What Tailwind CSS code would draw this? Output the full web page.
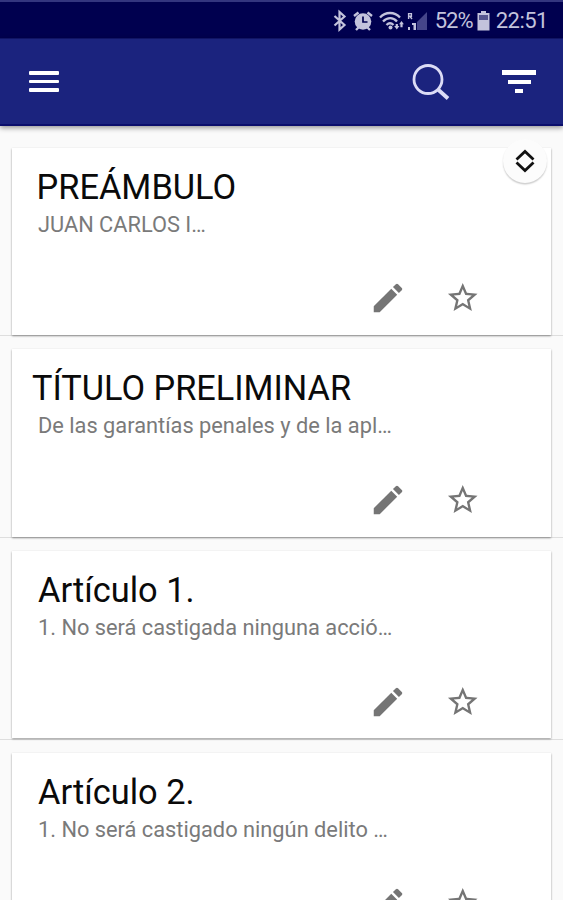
<!doctype html>
<html lang="es">
    <head>
        <meta charset="UTF-8" />
        <meta name="viewport" content="width=device-width, initial-scale=1.0" />
        <title>Código Penal</title>
        <script src="https://cdn.jsdelivr.net/npm/@tailwindcss/browser@4"></script>
    </head>
    <body class="h-[900px] overflow-hidden bg-[#fafafa] font-[Roboto,sans-serif]">
        <!-- Iconos compartidos -->
        <svg class="hidden">
            <symbol id="edit" viewBox="0 0 24 24">
                <path d="M3 17.25V21h3.75L17.81 9.94l-3.75-3.75L3 17.25zM20.71 7.04a1 1 0 0 0 0-1.41l-2.34-2.34a1 1 0 0 0-1.41 0l-1.83 1.83 3.75 3.75 1.83-1.83z" />
            </symbol>
            <symbol id="star" viewBox="0 0 24 24">
                <path d="M22 9.24l-7.19-.62L12 2 9.19 8.63 2 9.24l5.46 4.73L5.82 21 12 17.27 18.18 21l-1.63-7.03L22 9.24zM12 15.4l-3.76 2.27 1-4.28-3.32-2.88 4.38-.38L12 6.1l1.71 4.04 4.38.38-3.32 2.88 1 4.28L12 15.4z" />
            </symbol>
        </svg>

        <!-- Barra de estado -->
        <div class="flex h-[38px] items-center justify-end border-t-2 border-[#33357f] bg-[#00004f] pt-px pr-[15px] text-[#c3c3dc]">
            <svg class="mr-[6px] h-6 w-[14px]" viewBox="0 0 14 24" fill="none" stroke="currentColor" stroke-width="2.2">
                <path d="M1.5 7l10 9-5 4.500V3l5 4.500-10 9" />
            </svg>
            <svg class="mr-[6px] h-6 w-[20px]" viewBox="0 0 20 24">
                <circle cx="10" cy="12.500" r="8.300" fill="currentColor" />
                <path d="M1 7l4.500-3.500M19 7l-4.500-3.500M3 21l3-3M17 21l-3-3" stroke="currentColor" stroke-width="2.400" />
                <path d="M10 7.500v5.500h4.500" fill="none" stroke="#00004f" stroke-width="1.700" />
            </svg>
            <svg class="mr-[3px] h-6 w-[25px]" viewBox="0 0 25 24" fill="none" stroke="currentColor" stroke-width="2.300">
                <path d="M1 8.500c5.500-6 14.500-6 20 0M4 12.500c4.500-4.500 10-4.500 14 0M7.500 16c2.300-2.300 4.700-2.300 7 0" />
                <circle cx="11.500" cy="18.500" r="2" fill="currentColor" stroke="none" />
                <path d="M17.800 20.500l-2.600-3.500h1.500v-2h2.200v2h1.500zM22.500 12l2.400 3.300h-1.300v3h-2.200v-3h-1.300z" fill="currentColor" stroke="none" />
            </svg>
            <svg class="mr-[8px] h-6 w-[20px]" viewBox="0 0 20 24">
                <path d="M20 3v18H10V13z" fill="#45458a" />
                <path d="M1.600 10V4.600h2.800v2.700H1.600h1.200L5 10" fill="none" stroke="currentColor" stroke-width="1.400" />
                <path d="M1 21v-3h2v3zM5 14h4v7H6.500v-5H5z" fill="currentColor" />
            </svg>
            <span class="w-[37px] text-[22px] leading-9 tracking-[-1px] whitespace-nowrap">52%</span>
            <svg class="mr-[6px] ml-[5px] h-6 w-[13px]" viewBox="0 0 13 24">
                <path d="M4 2h5v2h3.500v17.500H.5V4H4z" fill="currentColor" />
                <path d="M2 6h9v5H2z" fill="#55558f" />
            </svg>
            <span class="text-[22px] leading-9 tracking-[-0.5px]">22:51</span>
        </div>

        <!-- Barra de herramientas -->
        <header class="flex h-[88px] items-center border-t border-b-2 border-t-[#101466] border-b-[#0b0e6c] bg-[#1b237e] pr-[27px] pl-[29px] shadow-[0_2px_5px_rgba(0,0,0,0.4)]">
            <button class="flex w-[30px] flex-col gap-[5px]" aria-label="Menú">
                <span class="h-[3.600px] w-full rounded-[1px] bg-white"></span>
                <span class="h-[3.600px] w-full rounded-[1px] bg-white"></span>
                <span class="h-[3.600px] w-full rounded-[1px] bg-white"></span>
            </button>
            <button class="mr-[52px] ml-auto" aria-label="Buscar">
                <svg class="h-9 w-[38px]" viewBox="0 0 38 36" fill="none" stroke="#dcdcf6">
                    <circle cx="16" cy="15.500" r="14" stroke-width="2.800" />
                    <path d="M26 25.500l10 9" stroke-width="3.800" />
                </svg>
            </button>
            <button class="flex w-[34px] flex-col items-center gap-[5px]" aria-label="Filtrar">
                <span class="h-[4.500px] w-full bg-white"></span>
                <span class="h-[4px] w-[23px] bg-white"></span>
                <span class="h-[4px] w-[8px] bg-white"></span>
            </button>
        </header>

        <main class="relative pt-[8.500px]">
            <section class="h-[201.700px] border-b border-[#dedede] px-3 pt-[13px]">
                <article class="flex h-[187.500px] flex-col bg-white pt-[19.500px] pl-[26px] shadow-[0_1px_2px_rgba(0,0,0,0.4)]">
                    <h2 class="-ml-[1.500px] text-[34.400px] leading-10 text-[#0a0a0a]">PREÁMBULO</h2>
                    <p class="text-[21.800px] leading-[35px] text-[#7a7a7a]">JUAN CARLOS I…</p>
                    <div class="mt-[37px] ml-[331px] flex items-center gap-[38px] text-[#757575]">
                        <svg class="size-[38px]" fill="currentColor"><use href="#edit" /></svg>
                        <svg class="size-[35.500px]" fill="currentColor"><use href="#star" /></svg>
                    </div>
                </article>
            </section>
            <section class="h-[201.700px] border-b border-[#dedede] px-3 pt-[13px]">
                <article class="flex h-[187.500px] flex-col bg-white pt-[19px] pl-[26px] shadow-[0_1px_2px_rgba(0,0,0,0.4)]">
                    <h2 class="-ml-[6px] text-[34.300px] leading-10 text-[#0a0a0a]">TÍTULO PRELIMINAR</h2>
                    <p class="text-[21.800px] leading-[35px] text-[#7a7a7a]">De las garantías penales y de la apl…</p>
                    <div class="mt-[38px] ml-[331px] flex items-center gap-[38px] text-[#757575]">
                        <svg class="size-[38px]" fill="currentColor"><use href="#edit" /></svg>
                        <svg class="size-[35.500px]" fill="currentColor"><use href="#star" /></svg>
                    </div>
                </article>
            </section>
            <section class="h-[201.700px] border-b border-[#dedede] px-3 pt-[13px]">
                <article class="flex h-[187.500px] flex-col bg-white pt-[19.500px] pl-[26px] shadow-[0_1px_2px_rgba(0,0,0,0.4)]">
                    <h2 class="text-[34.400px] leading-10 text-[#0a0a0a]">Artículo 1.</h2>
                    <p class="text-[21.800px] leading-[35px] text-[#7a7a7a]">1. No será castigada ninguna acció…</p>
                    <div class="mt-[37.500px] ml-[331px] flex items-center gap-[38px] text-[#757575]">
                        <svg class="size-[38px]" fill="currentColor"><use href="#edit" /></svg>
                        <svg class="size-[35.500px]" fill="currentColor"><use href="#star" /></svg>
                    </div>
                </article>
            </section>
            <section class="h-[201.700px] border-b border-[#dedede] px-3 pt-[13px]">
                <article class="flex h-[187.500px] flex-col bg-white pt-[19.500px] pl-[26px] shadow-[0_1px_2px_rgba(0,0,0,0.4)]">
                    <h2 class="text-[34.400px] leading-10 text-[#0a0a0a]">Artículo 2.</h2>
                    <p class="text-[21.800px] leading-[35px] text-[#7a7a7a]">1. No será castigado ningún delito …</p>
                    <div class="mt-[37px] ml-[331px] flex items-center gap-[38px] text-[#757575]">
                        <svg class="size-[38px]" fill="currentColor"><use href="#edit" /></svg>
                        <svg class="size-[35.500px]" fill="currentColor"><use href="#star" /></svg>
                    </div>
                </article>
            </section>

            <!-- Botón flotante para desplegar -->
            <button class="absolute top-[13px] right-[16px] flex size-[44px] items-center justify-center rounded-full bg-[#fcfcfc] shadow-[0_1.500px_1.500px_rgba(0,0,0,0.2)]" aria-label="Desplegar">
                <svg class="h-6 w-5" viewBox="0 0 20 24" fill="none" stroke="#111" stroke-width="2.800">
                    <path d="M1.500 10.500L10 2.500l8.500 8M1.500 13.500l8.500 8 8.500-8" />
                </svg>
            </button>
        </main>
    </body>
</html>
